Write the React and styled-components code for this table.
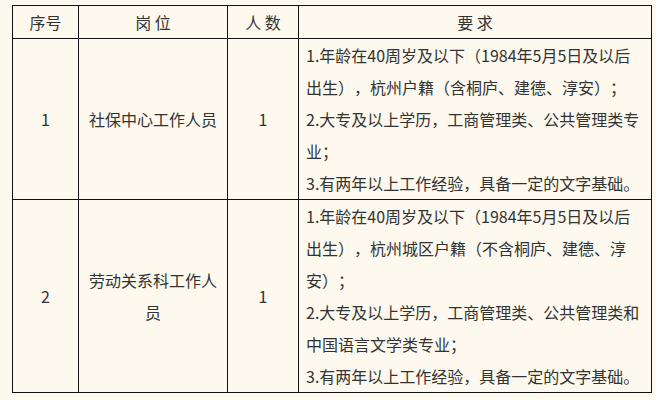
import React from 'react';
import styled, { createGlobalStyle } from 'styled-components';

const GlobalStyle = createGlobalStyle`
    html, body {
        margin: 0;
        padding: 0;
        background-color: #fdf9ee;
    }
    body {
        font-family: "Noto Sans CJK SC", "Noto Sans", sans-serif;
        color: #333;
    }
`;

const Page = styled.div`
    width: 656px;
    height: 400px;
    box-sizing: border-box;
    padding: 5px 0 0 12px;
    background-color: #fdf9ee;
`;

const Table = styled.table`
    border-collapse: collapse;
    table-layout: fixed;
    width: 639px;
    font-size: 16px;
    line-height: 32px;
    text-spacing-trim: space-all;
`;

const Col = styled.col`
    width: ${props => props.$width}px;
`;

const HeadCell = styled.th`
    border: 1px solid #111;
    padding: 0 7px;
    font-weight: 400;
    text-align: center;
    white-space: pre;
`;

const Cell = styled.td`
    border: 1px solid #111;
    padding: 0 7px;
    vertical-align: middle;
    text-align: ${props => props.$left ? 'left' : 'center'};
`;

const Para = styled.p`
    margin: 0;
`;

const HEADERS = ['序号', '岗 位', '人 数', '要 求'];

const ROWS = [
    {
        id: '1',
        post: '社保中心工作人员',
        count: '1',
        reqs: [
            '1.年龄在40周岁及以下（1984年5月5日及以后出生），杭州户籍（含桐庐、建德、淳安）；',
            '2.大专及以上学历，工商管理类、公共管理类专业；',
            '3.有两年以上工作经验，具备一定的文字基础。',
        ],
    },
    {
        id: '2',
        post: '劳动关系科工作人员',
        count: '1',
        reqs: [
            '1.年龄在40周岁及以下（1984年5月5日及以后出生），杭州城区户籍（不含桐庐、建德、淳安）；',
            '2.大专及以上学历，工商管理类、公共管理类和中国语言文学类专业；',
            '3.有两年以上工作经验，具备一定的文字基础。',
        ],
    },
];

const App = () => {
    return (
        <Page>
            <GlobalStyle />
            <Table>
                <colgroup>
                    <Col $width={66} />
                    <Col $width={149} />
                    <Col $width={71} />
                    <Col $width={353} />
                </colgroup>
                <thead>
                    <tr>
                        {HEADERS.map(h => <HeadCell key={h}>{h}</HeadCell>)}
                    </tr>
                </thead>
                <tbody>
                    {ROWS.map(row => (
                        <tr key={row.id}>
                            <Cell>{row.id}</Cell>
                            <Cell>{row.post}</Cell>
                            <Cell>{row.count}</Cell>
                            <Cell $left>
                                {row.reqs.map(r => <Para key={r}>{r}</Para>)}
                            </Cell>
                        </tr>
                    ))}
                </tbody>
            </Table>
        </Page>
    );
};

export default App;
